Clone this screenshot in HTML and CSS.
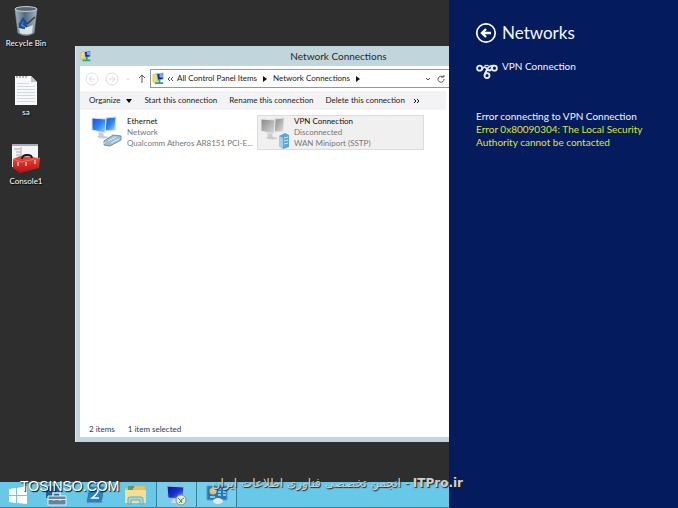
FILE: index.html
```html
<!DOCTYPE html>
<html lang="en">
<head>
<meta charset="utf-8">
<title>Network Connections</title>
<link rel="stylesheet" href="styles.css">
</head>
<body>
<svg class="defs" width="0" height="0" aria-hidden="true">
  <defs>
    <linearGradient id="blue" x1="0" y1="0" x2="1" y2="1"><stop offset="0" stop-color="#1553cf"/><stop offset=".5" stop-color="#2c83f5"/><stop offset="1" stop-color="#a9e0ff"/></linearGradient>
    <linearGradient id="navy" x1="0" y1="0" x2="1" y2="1"><stop offset="0" stop-color="#0712a0"/><stop offset=".55" stop-color="#1635d2"/><stop offset="1" stop-color="#8ebcf5"/></linearGradient>
    <linearGradient id="gray" x1="0" y1="0" x2="1" y2="1"><stop offset="0" stop-color="#858585"/><stop offset="1" stop-color="#dedede"/></linearGradient>
    <linearGradient id="bin" x1="0" x2="1"><stop offset="0" stop-color="#a2b3bf"/><stop offset=".45" stop-color="#536a7c"/><stop offset="1" stop-color="#a6b5c0"/></linearGradient>
    <linearGradient id="red" x1="0" y1="0" x2="0" y2="1"><stop offset="0" stop-color="#ef4b40"/><stop offset="1" stop-color="#b80f10"/></linearGradient>
    <symbol id="network" viewBox="0 0 14 14">
      <path d="M1 3l5-2v9l-5 1z" fill="#f4df62" stroke="#c6a838" stroke-width=".5"/>
      <path d="M5 2l7-1v7l-6 1z" fill="#1c2d92" stroke="#b8c8df"/>
      <circle cx="10" cy="4" r="2.2" fill="#78aee9"/>
      <path d="M7 8h2v3h3v2H3v-2h4z" fill="#31a66c"/>
    </symbol>
  </defs>
</svg>
<div class="screen">
  <main class="desktop">
    <div class="workspace">
      <nav class="shortcuts" aria-label="Desktop">
        <a class="shortcut" href="#bin">
          <svg width="28" height="33" viewBox="0 0 28 33"><path d="M3 4L6 28q8 5 16 0L25 4z" fill="url(#bin)" stroke="#8999a5" stroke-width=".6"/><ellipse cx="14" cy="4" rx="11" ry="2.4" fill="#566775" stroke="#cbd4da"/><path d="M7 23l4-2 5 1 5-2-1 8q-6 3-12 0z" fill="#dfe2df"/><path d="M8 19l3-5 3 4-2 1 3 3M8 18v4l5 1" fill="none" stroke="#174da6" stroke-width="2.3"/><path d="M15 19l8-7" stroke="#303b45" stroke-width="1.5"/></svg>
          <span>Recycle Bin</span>
        </a>
        <a class="shortcut" href="#sa">
          <svg width="28" height="33" viewBox="0 0 28 33"><path d="M3 2h16l6 6v23H3z" fill="#f7f8f9"/><path d="M19 2v6h6z" fill="#bfc3c8"/><path d="M5 2v2m3-2v2m3-2v2m3-2v2" stroke="#777"/><path d="M5 9.500h12M5 12.500h18M5 15.500h18M5 18.500h18M5 21.500h18M5 24.500h18M5 27.500h18" stroke="#d3d9e3"/></svg>
          <span>sa</span>
        </a>
        <a class="shortcut" href="#console">
          <svg width="32" height="33" viewBox="1 2 32 33"><path d="M3 3h26v23H3z" fill="#f4f5f6"/><path d="M3 3h26v2H3z" fill="#a4abb1"/><path d="M5 8h6M7 11h4M7 14h4M12 6v12" stroke="#9da7b0"/><path d="M4 18l7-3 20 2-1 10-19 5-7-5z" fill="url(#red)"/><path d="M4 18l8 3 19-4" fill="none" stroke="#ff8980" stroke-width=".6"/><path d="M13 18q0-4 5-4t5 3" fill="none" stroke="#151515" stroke-width="1.8"/><path d="M9 21v4m8-4v4m9-6v4" stroke="#ddd" stroke-width="1.2"/></svg>
          <span>Console1</span>
        </a>
      </nav>

      <section class="window" aria-label="Network Connections">
        <header class="titlebar">
          <svg width="12" height="12"><use href="#network"/></svg>
          <h1>Network Connections</h1>
        </header>
        <div class="content">
          <div class="navigation">
            <button class="round" aria-label="Back"><svg width="14" height="14" viewBox="0 0 14 14"><circle cx="7" cy="7" r="6"/><path d="M10 7H4m3-3L4 7l3 3"/></svg></button>
            <button class="round" aria-label="Forward"><svg width="14" height="14" viewBox="0 0 14 14"><circle cx="7" cy="7" r="6"/><path d="M4 7h6M7 4l3 3-3 3"/></svg></button>
            <button class="round" aria-label="Recent locations"><svg width="6" height="6" viewBox="0 0 6 6"><path d="M1 2l2 2 2-2"/></svg></button>
            <button class="up" aria-label="Up"><svg width="8" height="10" viewBox="0 0 8 10"><path d="M4 9V1M1 4l3-3 3 3"/></svg></button>
            <div class="address">
              <svg width="13" height="13"><use href="#network"/></svg>
              <svg class="chevrons" width="6" height="6" viewBox="0 0 6 6"><path d="M3 1L1 3l2 2M6 1L4 3l2 2"/></svg>
              <a href="#items">All Control Panel Items</a>
              <svg width="4" height="6" viewBox="0 0 4 6"><path d="M0 0l4 3-4 3z"/></svg>
              <a href="#connections">Network Connections</a>
              <svg width="4" height="6" viewBox="0 0 4 6"><path d="M0 0l4 3-4 3z"/></svg>
              <button class="history" aria-label="Previous locations"><svg width="6" height="6" viewBox="0 0 6 6"><path d="M1 2l2 2 2-2"/></svg></button>
              <button aria-label="Refresh"><svg width="8" height="8" viewBox="0 0 8 8"><path d="M6 2a3 3 0 1 0 1 2M4 2h3V0"/></svg></button>
            </div>
          </div>
          <div class="commands">
            <button>Organize <svg width="6" height="4" viewBox="0 0 6 4"><path d="M0 0h6L3 4z"/></svg></button>
            <button>Start this connection</button>
            <button>Rename this connection</button>
            <button>Delete this connection</button>
            <button class="more" aria-label="More commands"><svg width="7" height="6" viewBox="0 0 7 6"><path d="M1 1l2 2-2 2M4 1l2 2-2 2" fill="none" stroke="#111"/></svg></button>
          </div>
          <div class="connections">
            <button class="connection">
              <svg width="32" height="33" viewBox="2 1 32 33"><path d="M17 3l10-1-1 13-10 1z" fill="url(#blue)" stroke="#d5dce1"/><path d="M3 3l14 1-1 14-13-3z" fill="url(#blue)" stroke="#e1e6ea"/><path d="M9 17l5 1 1 3 5 1q-5 3-12 0l2-2z" fill="#c8ced2"/><path d="M15 26l9-6 8 1v4l-11 6-6-1z" fill="#9ebed4" stroke="#6d92aa"/><path d="M19 26l8-4M22 28l8-4M14 29l3-2" stroke="#e4eff5"/></svg>
              <span class="details"><span class="name">Ethernet</span><span>Network</span><span>Qualcomm Atheros AR8151 PCI-E...</span></span>
            </button>
            <button class="connection selected">
              <svg width="32" height="33" viewBox="0 0 32 33"><path d="M17 3l9-1-1 13-9 1z" fill="url(#gray)" stroke="#dedede"/><path d="M3 3l14 1-1 14-13-3z" fill="url(#gray)" stroke="#e7e7e7"/><path d="M9 17l5 1 1 3 5 1q-5 3-12 0l2-2z" fill="#ccc"/><path d="M21 20l6-3 4 2v12l-6 2-4-3z" fill="#5fa2d4"/><path d="M21 20l4 2v11l-4-3z" fill="#a4cee8"/><path d="M26 22l4-1m-4 4l4-1m-4 4l4-1" stroke="#d6efff"/></svg>
              <span class="details"><span class="name">VPN Connection</span><span>Disconnected</span><span>WAN Miniport (SSTP)</span></span>
            </button>
          </div>
          <footer class="status"><span>2 items</span><span>1 item selected</span></footer>
        </div>
      </section>
    </div>

    <nav class="taskbar" aria-label="Taskbar">
      <button aria-label="Start"><svg width="18" height="18" viewBox="0 0 18 18"><path d="M0 3l7-1v7H0zM8 2l10-2v9H8zM0 10h7v7l-7-1zM8 10h10v8L8 17z" fill="#fff"/></svg></button>
      <button aria-label="Server Manager"><svg width="22" height="22" viewBox="0 0 22 22"><path d="M1 2h14v12H1z" fill="#1763a9"/><path d="M8 12V9h7v3" fill="none" stroke="#e4edf3" stroke-width="1.500"/><path d="M3 12h18v9H3z" fill="#6484a0" stroke="#e4edf3"/><path d="M3 15.500h18M9 15v2m6-2v2" stroke="#e4edf3"/></svg></button>
      <button aria-label="PowerShell"><svg width="22" height="22" viewBox="0 0 22 22"><path d="M4 2h16l-3 17H1z" fill="#2583bf" stroke="#76b9dd"/><path d="M8 7q4-3 5 0 0 2-6 7h7" fill="none" stroke="#fff" stroke-width="1.6"/></svg></button>
      <button aria-label="File Explorer"><svg width="24" height="22" viewBox="0 0 24 22"><path d="M1 4h8l2-2h10v17H1z" fill="#e5bf61"/><path d="M4 2h5v5H4z" fill="#4ba574"/><path d="M7 2h3v2H7z" fill="#d25f4c"/><path d="M1 6h21v13H1z" fill="#f7df91"/><path d="M4 20v-5q0-2 2-2h11q2 0 2 2v5h-3v-4H7v4z" fill="#9edaec" stroke="#60a9c7"/></svg></button>
      <button class="open" aria-label="Remote Desktop"><svg width="22" height="22" viewBox="0 0 22 22"><path d="M1 2l17 1-1 12-15-1z" fill="url(#navy)" stroke="#a7bfd0"/><path d="M7 15h6l2 4H5z" fill="#d2dbe0"/><circle cx="15" cy="16" r="5" fill="#e4ebe3" stroke="#819390"/><path d="M12 14l3 3-2 2m5-5l-3 2 1 3" fill="none" stroke="#428b4c"/></svg></button>
      <button class="open" aria-label="Control Panel"><svg width="22" height="22" viewBox="0 0 22 22"><path d="M1 2h20v14H1z" fill="#2379ba" stroke="#4aa2d6"/><circle cx="7" cy="7" r="3.5" fill="#f0ba62"/><path d="M7 7V3a4 4 0 0 1 4 4z" fill="#d2edfa"/><path d="M12 5h3m2 0h3M12 8h3m2 0h3M12 11h3m2 0h3M4 13h5" stroke="#a8dbf5" stroke-width="1.5"/><ellipse cx="12" cy="17" rx="5" ry="3" fill="#e5e9ea"/></svg></button>
    </nav>
  </main>

  <aside class="networks">
    <header class="networks-title">
      <button aria-label="Back"><svg width="22" height="22" viewBox="0 0 22 22"><circle cx="10" cy="11" r="9.2" fill="none" stroke="#fff" stroke-width="1.7"/><path d="M15 11H6m4-4l-4 4 4 4" fill="none" stroke="#fff" stroke-width="2.4"/></svg></button>
      <h2>Networks</h2>
    </header>
    <div class="vpn">
      <svg width="22" height="16" viewBox="0 0 22 16"><g fill="none" stroke="#e9efff" stroke-width="1.8"><circle cx="3.6" cy="5.2" r="2.5"/><circle cx="18.4" cy="5.2" r="2.500"/><circle cx="11" cy="12.600" r="2.500"/><path d="M5.500 7Q8 2.500 10 5T14 7.500L16.500 5M18 2.700Q13 2.500 11 6.500T8.500 12.500"/><path d="M8.500 2.500h4" stroke-width="1.2"/></g></svg>
      <span>VPN Connection</span>
    </div>
    <div class="message" role="alert">
      <p>Error connecting to VPN Connection</p>
      <p class="error">Error 0x80090304: The Local Security Authority cannot be contacted</p>
    </div>
  </aside>
  <div class="brand">TOSINSO.COM</div>
  <div class="credit" dir="rtl" lang="fa"><span class="site" dir="ltr">ITPro.ir</span> - انجمن تخصصی فناوری اطلاعات ایران</div>
</div>
</body>
</html>
```
FILE: styles.css
```css
* { box-sizing: border-box; }
body {
  margin: 0;
  background: #2e2e2e;
  color: #222;
  font: 8px/11px Lato, "Open Sans", sans-serif;
}
h1, h2, p { margin: 0; font-weight: 400; }
button { margin: 0; padding: 0; border: 0; background: none; color: inherit; font: inherit; text-align: left; }
a { color: inherit; text-decoration: none; }
svg { display: block; flex: none; }
.defs { position: absolute; }
.screen { position: relative; display: flex; min-height: 100vh; overflow: hidden; }
.desktop { flex: 1; min-width: 0; display: flex; flex-direction: column; }
.workspace { flex: 1; display: flex; }

.shortcuts { width: 75px; display: flex; flex-direction: column; gap: 25px; padding-top: 5px; }
.shortcut { width: 52px; display: flex; flex-direction: column; align-items: center; color: #fff; text-shadow: 1px 1px 1px #000; white-space: nowrap; }

.window { flex: 1; min-width: 0; display: flex; flex-direction: column; margin: 46px 0 40px; padding: 0 0 5px 4px; background: #c1d5dc; border-left: 1px solid #d9e8ed; }
.titlebar { height: 20px; display: flex; align-items: center; }
.titlebar h1 { flex: 1; padding-left: 136px; color: #1d2a30; font-size: 10px; line-height: 14px; text-align: center; }
.content { flex: 1; display: flex; flex-direction: column; background: #fff; }
.navigation { height: 25px; display: flex; align-items: center; padding-left: 5px; }
.navigation svg { fill: none; stroke: #555; }
.navigation .round { margin-right: 6px; }
.navigation .round svg { stroke: #dcdcdc; }
.up { margin: 0 4px 0 1px; }
.address { flex: 1; height: 19px; display: flex; align-items: center; gap: 6px; padding: 0 4px 0 1px; border: 1px solid #969696; border-right: 0; white-space: nowrap; }
.address > svg:not(.chevrons) { fill: #111; stroke: none; }
.chevrons { margin: 0 -2px 0 -4px; }
.history { margin-left: auto; }

.commands { height: 19px; display: flex; align-items: center; gap: 12px; padding-left: 9px; margin-right: 3px; background: #f3f3f5; white-space: nowrap; }
.commands button:first-child { display: flex; align-items: center; gap: 6px; }
.more { margin-left: -4px; }

.connections { flex: 1; display: flex; align-items: flex-start; padding: 5px 0 0 10px; }
.connection { width: 167px; height: 35px; display: flex; gap: 4px; border: 1px solid transparent; color: #777; }
.connection.selected { background: #f0f0f0; border-color: #dcdcdc; }
.details { display: flex; flex-direction: column; white-space: nowrap; }
.name { color: #111; }
.status { height: 13px; display: flex; gap: 13px; padding-left: 9px; color: #243a68; }

.taskbar { height: 26px; display: flex; background: #68c8e8; border-bottom: 1px solid #3b7f9b; }
.taskbar button { width: 40px; display: flex; align-items: center; justify-content: center; }
.taskbar button:first-child { width: 36px; }
.taskbar .open { border-right: 1px solid #397f9a; background: #77cdea; }
.taskbar button:not(.open) + .open { width: 41px; border-left: 1px solid #397f9a; }

.networks { width: 229px; padding: 22px 34px 0 27px; background: #041b5e; color: #f5f7ff; font-size: 10px; line-height: 13px; }
.networks-title { display: flex; align-items: center; gap: 4px; }
.networks-title h2 { font-size: 17px; line-height: 22px; }
.vpn { display: flex; gap: 4px; margin-top: 16px; }
.vpn svg { margin-top: 3px; }
.message { margin-top: 31px; }
.error { color: #dfe733; }

.brand { position: absolute; left: 20px; bottom: 13px; color: #fff; font: 14px/17px "Liberation Sans", sans-serif; text-shadow: 1px 1px 1px #000; }
.credit { position: absolute; right: 215px; bottom: 16px; color: #d0d0d0; font: 12px/18px "DejaVu Sans", sans-serif; text-shadow: 1px 1px 1px #222; white-space: nowrap; }
.site { font-weight: 700; }
```
